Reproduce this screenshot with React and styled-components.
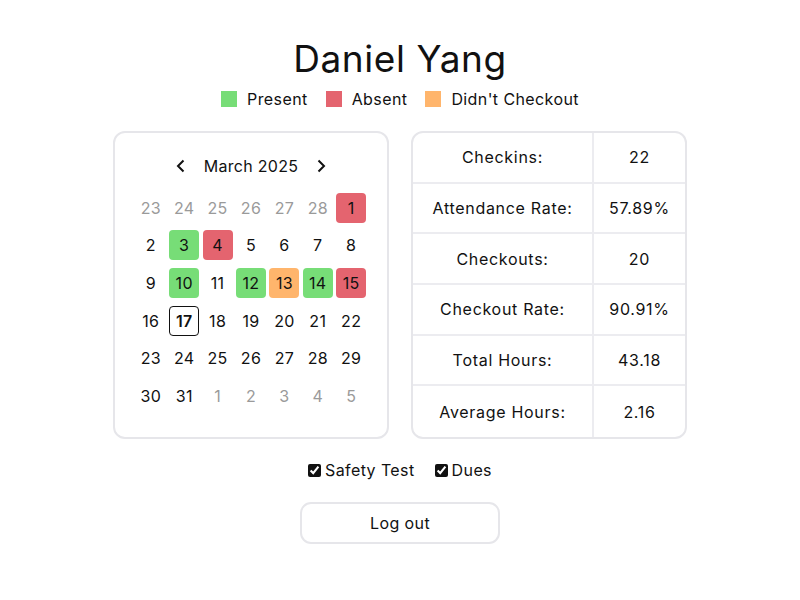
import React from "react";
import styled, { createGlobalStyle } from "styled-components";

const GlobalStyle = createGlobalStyle`
  body {
    margin: 0;
    background: #ffffff;
    font-family: "Inter", "Liberation Sans", sans-serif;
    color: #111;
  }
`;

const Page = styled.div`
  display: flex;
  flex-direction: column;
  align-items: center;
  padding-top: 35px;
`;

const Title = styled.h1`
  margin: 0;
  font-size: 37px;
  font-weight: 400;
  line-height: 48px;
  letter-spacing: 0.6px;
  color: #111;
`;

const Legend = styled.div`
  display: flex;
  align-items: center;
  gap: 18px;
  margin-top: 6px;
  font-size: 16px;
  letter-spacing: 0.4px;
`;

const LegendItem = styled.div`
  display: flex;
  align-items: center;
  gap: 10px;
`;

const Swatch = styled.span`
  width: 16px;
  height: 16px;
  background: ${(p) => p.color};
`;

const Panels = styled.div`
  display: flex;
  gap: 22px;
  margin-top: 22px;
`;

const Card = styled.div`
  width: 272px;
  height: 304px;
  border: 2px solid #e6e6ea;
  border-radius: 12px;
  box-sizing: content-box;
`;

const CalendarCard = styled(Card)`
  display: flex;
  flex-direction: column;
  align-items: center;
`;

const MonthBar = styled.div`
  display: flex;
  align-items: center;
  gap: 15px;
  height: 30px;
  margin-top: 18px;
  font-size: 16px;
  letter-spacing: 0.3px;
`;

const Arrow = styled.svg`
  width: 16px;
  height: 16px;
`;

const DayGrid = styled.div`
  display: grid;
  grid-template-columns: repeat(7, 33.4px);
  grid-auto-rows: 37.6px;
  margin-top: 8px;
`;

const dayBg = {
  present: "#77dd77",
  absent: "#e4646f",
  late: "#ffb56c",
};

const Day = styled.div`
  display: flex;
  align-items: center;
  justify-content: center;
  justify-self: center;
  align-self: center;
  width: 30px;
  height: 30px;
  box-sizing: border-box;
  border-radius: 4px;
  font-size: 16px;
  letter-spacing: 0.3px;
  background: ${(p) => (p.status ? dayBg[p.status] : "transparent")};
  color: ${(p) => (p.muted ? "#9a9a9a" : "#111")};
  border: ${(p) => (p.today ? "1.5px solid #111" : "none")};
  font-weight: ${(p) => (p.today ? 600 : 400)};
`;

const StatsCard = styled(Card)`
  overflow: hidden;
`;

const StatsTable = styled.div`
  display: grid;
  grid-template-columns: 179px 1fr;
  grid-auto-rows: 1fr;
  height: 100%;
`;

const Cell = styled.div`
  display: flex;
  align-items: center;
  justify-content: center;
  font-size: 16px;
  letter-spacing: 0.7px;
  border-bottom: ${(p) => (p.last ? "none" : "2px solid #ececf0")};
  border-left: ${(p) => (p.value ? "2px solid #ececf0" : "none")};
`;

const Checks = styled.div`
  display: flex;
  gap: 20px;
  margin-top: 21px;
  font-size: 16px;
  letter-spacing: 0.4px;
`;

const CheckLabel = styled.label`
  display: flex;
  align-items: center;
  gap: 4px;

  input {
    margin: 0;
    width: 13px;
    height: 13px;
    accent-color: #111;
  }
`;

const LogoutButton = styled.button`
  margin-top: 22px;
  width: 200px;
  height: 42px;
  background: #fff;
  border: 2px solid #e6e6ea;
  border-radius: 11px;
  font-family: inherit;
  font-size: 16px;
  letter-spacing: 0.4px;
  color: #111;
`;

const days = [
  ...[23, 24, 25, 26, 27, 28].map((d) => ({ d, muted: true })),
  { d: 1, status: "absent" },
  { d: 2 },
  { d: 3, status: "present" },
  { d: 4, status: "absent" },
  { d: 5 },
  { d: 6 },
  { d: 7 },
  { d: 8 },
  { d: 9 },
  { d: 10, status: "present" },
  { d: 11 },
  { d: 12, status: "present" },
  { d: 13, status: "late" },
  { d: 14, status: "present" },
  { d: 15, status: "absent" },
  { d: 16 },
  { d: 17, today: true },
  ...Array.from({ length: 14 }, (_, i) => ({ d: 18 + i })),
  ...[1, 2, 3, 4, 5].map((d) => ({ d, muted: true })),
];

const stats = [
  ["Checkins:", "22"],
  ["Attendance Rate:", "57.89%"],
  ["Checkouts:", "20"],
  ["Checkout Rate:", "90.91%"],
  ["Total Hours:", "43.18"],
  ["Average Hours:", "2.16"],
];

export default function App() {
  return (
    <Page>
      <GlobalStyle />
      <Title>Daniel Yang</Title>
      <Legend>
        <LegendItem>
          <Swatch color="#77dd77" />
          Present
        </LegendItem>
        <LegendItem>
          <Swatch color="#e4646f" />
          Absent
        </LegendItem>
        <LegendItem>
          <Swatch color="#ffb56c" />
          Didn't Checkout
        </LegendItem>
      </Legend>

      <Panels>
        <CalendarCard>
          <MonthBar>
            <Arrow viewBox="0 0 16 16">
              <path d="M10.5 2.5 5 8l5.5 5.5" fill="none" stroke="#111" strokeWidth="2" />
            </Arrow>
            <span>March 2025</span>
            <Arrow viewBox="0 0 16 16">
              <path d="M5.5 2.5 11 8l-5.5 5.5" fill="none" stroke="#111" strokeWidth="2" />
            </Arrow>
          </MonthBar>
          <DayGrid>
            {days.map((day, i) => (
              <Day key={i} status={day.status} muted={day.muted} today={day.today}>
                {day.d}
              </Day>
            ))}
          </DayGrid>
        </CalendarCard>

        <StatsCard>
          <StatsTable>
            {stats.map(([label, value], i) => (
              <React.Fragment key={label}>
                <Cell last={i === stats.length - 1}>{label}</Cell>
                <Cell value last={i === stats.length - 1}>
                  {value}
                </Cell>
              </React.Fragment>
            ))}
          </StatsTable>
        </StatsCard>
      </Panels>

      <Checks>
        <CheckLabel>
          <input type="checkbox" defaultChecked />
          Safety Test
        </CheckLabel>
        <CheckLabel>
          <input type="checkbox" defaultChecked />
          Dues
        </CheckLabel>
      </Checks>

      <LogoutButton>Log out</LogoutButton>
    </Page>
  );
}
